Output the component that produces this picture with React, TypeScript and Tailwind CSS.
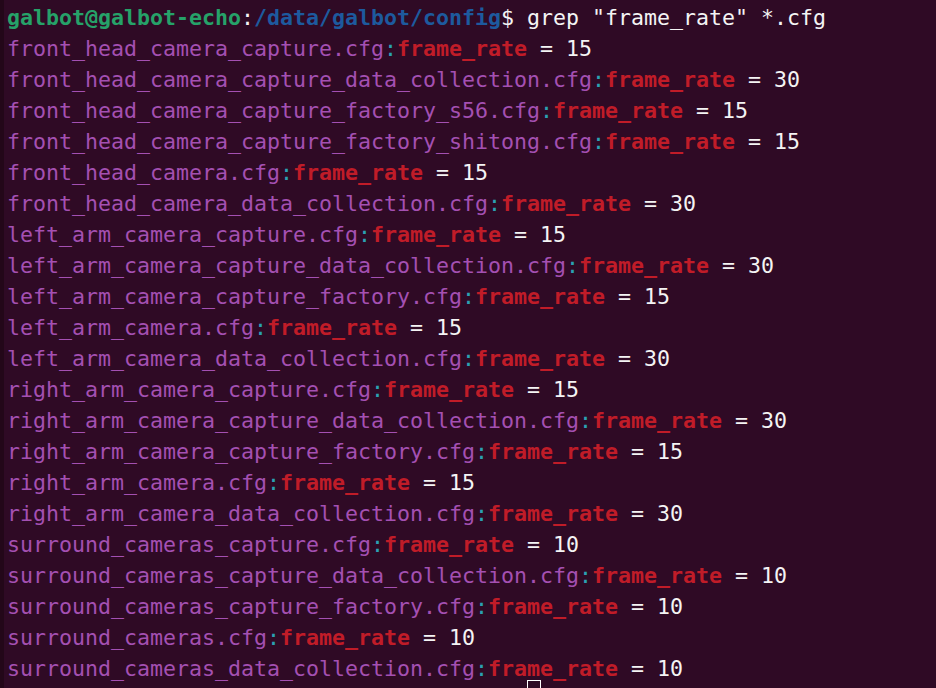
const results: [string, string][] = [
  ["front_head_camera_capture.cfg", "15"],
  ["front_head_camera_capture_data_collection.cfg", "30"],
  ["front_head_camera_capture_factory_s56.cfg", "15"],
  ["front_head_camera_capture_factory_shitong.cfg", "15"],
  ["front_head_camera.cfg", "15"],
  ["front_head_camera_data_collection.cfg", "30"],
  ["left_arm_camera_capture.cfg", "15"],
  ["left_arm_camera_capture_data_collection.cfg", "30"],
  ["left_arm_camera_capture_factory.cfg", "15"],
  ["left_arm_camera.cfg", "15"],
  ["left_arm_camera_data_collection.cfg", "30"],
  ["right_arm_camera_capture.cfg", "15"],
  ["right_arm_camera_capture_data_collection.cfg", "30"],
  ["right_arm_camera_capture_factory.cfg", "15"],
  ["right_arm_camera.cfg", "15"],
  ["right_arm_camera_data_collection.cfg", "30"],
  ["surround_cameras_capture.cfg", "10"],
  ["surround_cameras_capture_data_collection.cfg", "10"],
  ["surround_cameras_capture_factory.cfg", "10"],
  ["surround_cameras.cfg", "10"],
  ["surround_cameras_data_collection.cfg", "10"],
]

export default function App() {
  return (
    <div className="flex h-[688px] w-[936px] overflow-hidden bg-[#2f0a25]">
      {/* window edge */}
      <div className="w-[4px] shrink-0 bg-[#230719]" />
      <div
        className="flex-1 whitespace-pre pl-[3px] pt-[2px] text-[21.6px] leading-[31px] text-[#f4f4f4]"
        style={{ fontFamily: '"DejaVu Sans Mono", "Liberation Mono", monospace' }}
      >
        <div className="h-[31px]">
          <span className="font-bold text-[#26a269]">galbot@galbot-echo</span>
          <span>:</span>
          <span className="font-bold text-[#1d5a9e]">/data/galbot/config</span>
          <span>$ grep "frame_rate" *.cfg</span>
        </div>

        {results.map(([file, value]) => (
          <div key={file} className="h-[31px]">
            <span className="text-[#a450b2]">{file}</span>
            <span className="text-[#2aa1b3]">:</span>
            <span className="font-bold text-[#c01c28]">frame_rate</span>
            <span> = {value}</span>
          </div>
        ))}

        <div className="relative top-[-4px] h-[31px]">
          <span className="invisible">galbot@galbot-echo:/data/galbot/config$ </span>
          <span className="inline-block h-[28px] w-[14px] border border-white align-top" />
        </div>
      </div>
    </div>
  )
}
